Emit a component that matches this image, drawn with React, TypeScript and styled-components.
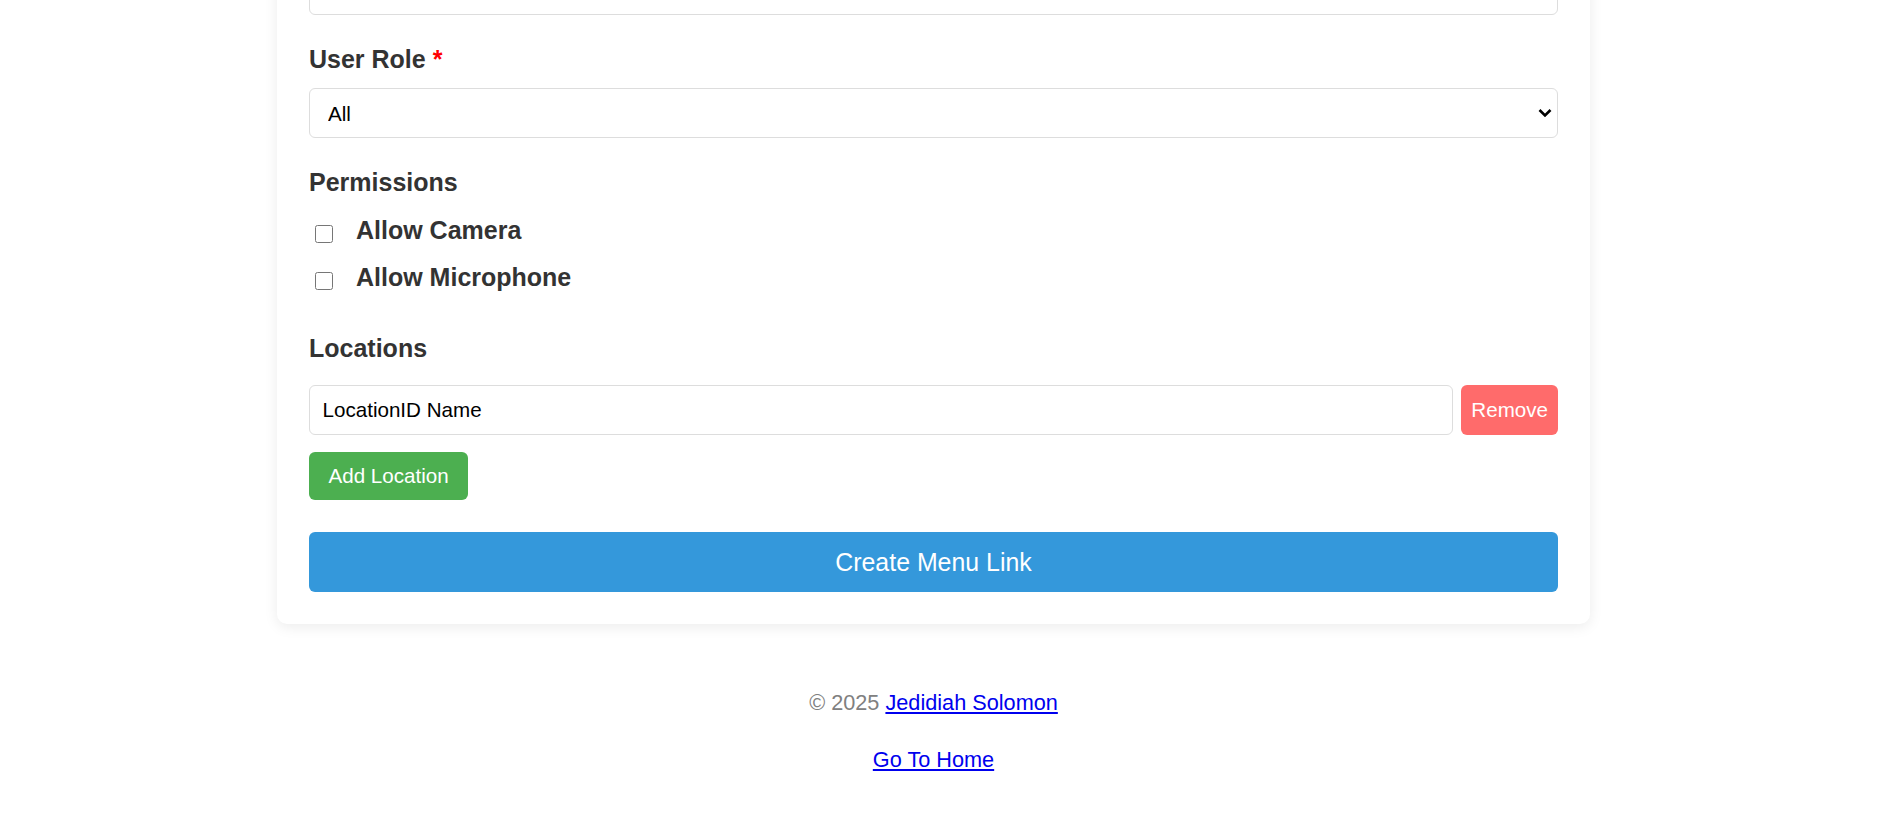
import React, { useState } from "react";
import styled, { createGlobalStyle } from "styled-components";

const GlobalStyle = createGlobalStyle`
  html, body {
    margin: 0;
    padding: 0;
    background: #ffffff;
    font-family: "Liberation Sans", Arial, sans-serif;
  }
  * {
    box-sizing: border-box;
  }
`;

const Page = styled.div`
  display: flex;
  flex-direction: column;
  align-items: center;
  margin-top: -108px;
  padding-right: 10px;
`;

const Card = styled.form`
  width: 1313px;
  padding: 32px 32px 32px;
  background: #ffffff;
  border-radius: 10px;
  box-shadow: 0 3px 14px rgba(0, 0, 0, 0.08);
`;

const FieldGroup = styled.div`
  margin-bottom: 32px;
`;

const Label = styled.label`
  display: block;
  margin-bottom: 16px;
  font-size: 25px;
  line-height: 25px;
  font-weight: 700;
  color: #333333;
`;

const Required = styled.span`
  color: #ff0000;
`;

const TextInput = styled.input`
  display: block;
  width: 100%;
  height: 50px;
  padding: 0 12.5px;
  border: 1px solid #dddddd;
  border-radius: 6px;
  font-family: inherit;
  font-size: 20.6px;
  color: #000000;
  background: #ffffff;
  outline: none;
`;

const SelectWrap = styled.div`
  position: relative;
`;

const Select = styled.select`
  display: block;
  width: 100%;
  height: 50px;
  padding: 0 18px;
  border: 1px solid #dddddd;
  border-radius: 6px;
  font-family: inherit;
  font-size: 20.6px;
  color: #000000;
  background: #ffffff;
  appearance: none;
  outline: none;
`;

const Chevron = styled.svg`
  position: absolute;
  right: 6px;
  top: 50%;
  transform: translateY(-50%);
  pointer-events: none;
`;

const CheckList = styled.div`
  display: flex;
  flex-direction: column;
  gap: 19px;
  padding: 7px 0 11px;
`;

const CheckRow = styled.label`
  display: flex;
  align-items: flex-start;
  height: 28px;
  font-size: 25px;
  line-height: 25px;
  font-weight: 700;
  color: #333333;
`;

const Checkbox = styled.input`
  width: 18px;
  height: 18px;
  margin: 6.5px 23px 0 6px;
`;

const SectionTitle = styled.h3`
  margin: 0 0 24px;
  font-size: 25px;
  line-height: 25px;
  font-weight: 700;
  color: #333333;
`;

const LocationRow = styled.div`
  display: flex;
  gap: 8.5px;
  margin-bottom: 17px;
`;

const Button = styled.button<{ $bg: string }>`
  border: none;
  border-radius: 6px;
  background: ${({ $bg }) => $bg};
  color: #ffffff;
  font-family: inherit;
  font-size: 20.6px;
  cursor: pointer;
`;

const RemoveButton = styled(Button)`
  flex: none;
  padding: 0 10px;
`;

const AddButton = styled(Button)`
  height: 48px;
  padding: 0 19.5px;
`;

const SubmitButton = styled(Button)`
  display: block;
  width: 100%;
  height: 60px;
  margin-top: 32px;
  font-size: 24.9px;
`;

const Footer = styled.footer`
  display: flex;
  flex-direction: column;
  align-items: center;
  gap: 32px;
  margin-top: 66px;
  font-size: 21.7px;
  line-height: 25px;
  color: #808080;
`;

const FooterLink = styled.a`
  color: #0000ee;
  text-decoration: underline;
`;

export default function App() {
  const [locations, setLocations] = useState<string[]>(["LocationID Name"]);

  return (
    <>
      <GlobalStyle />
      <Page>
        <Card onSubmit={(e) => e.preventDefault()}>
          <FieldGroup>
            <Label>Menu Link Name</Label>
            <TextInput type="text" />
          </FieldGroup>

          <FieldGroup>
            <Label>
              User Role <Required>*</Required>
            </Label>
            <SelectWrap>
              <Select defaultValue="all">
                <option value="all">All</option>
                <option value="admin">Admin</option>
                <option value="user">User</option>
              </Select>
              <Chevron width="14" height="9" viewBox="0 0 14 9">
                <polyline
                  points="1.5,1.5 7,7 12.5,1.5"
                  fill="none"
                  stroke="#000"
                  strokeWidth="2.6"
                />
              </Chevron>
            </SelectWrap>
          </FieldGroup>

          <FieldGroup>
            <Label as="div">Permissions</Label>
            <CheckList>
              <CheckRow>
                <Checkbox type="checkbox" />
                Allow Camera
              </CheckRow>
              <CheckRow>
                <Checkbox type="checkbox" />
                Allow Microphone
              </CheckRow>
            </CheckList>
          </FieldGroup>

          <SectionTitle>Locations</SectionTitle>
          {locations.map((loc, i) => (
            <LocationRow key={i}>
              <TextInput
                type="text"
                value={loc}
                onChange={(e) =>
                  setLocations(locations.map((l, j) => (j === i ? e.target.value : l)))
                }
              />
              <RemoveButton
                type="button"
                $bg="#ff6b6b"
                onClick={() => setLocations(locations.filter((_, j) => j !== i))}
              >
                Remove
              </RemoveButton>
            </LocationRow>
          ))}
          <AddButton
            type="button"
            $bg="#4caf50"
            onClick={() => setLocations([...locations, ""])}
          >
            Add Location
          </AddButton>

          <SubmitButton type="submit" $bg="#3498db">
            Create Menu Link
          </SubmitButton>
        </Card>

        <Footer>
          <span>
            © 2025 <FooterLink href="#">Jedidiah Solomon</FooterLink>
          </span>
          <FooterLink href="#">Go To Home</FooterLink>
        </Footer>
      </Page>
    </>
  );
}
